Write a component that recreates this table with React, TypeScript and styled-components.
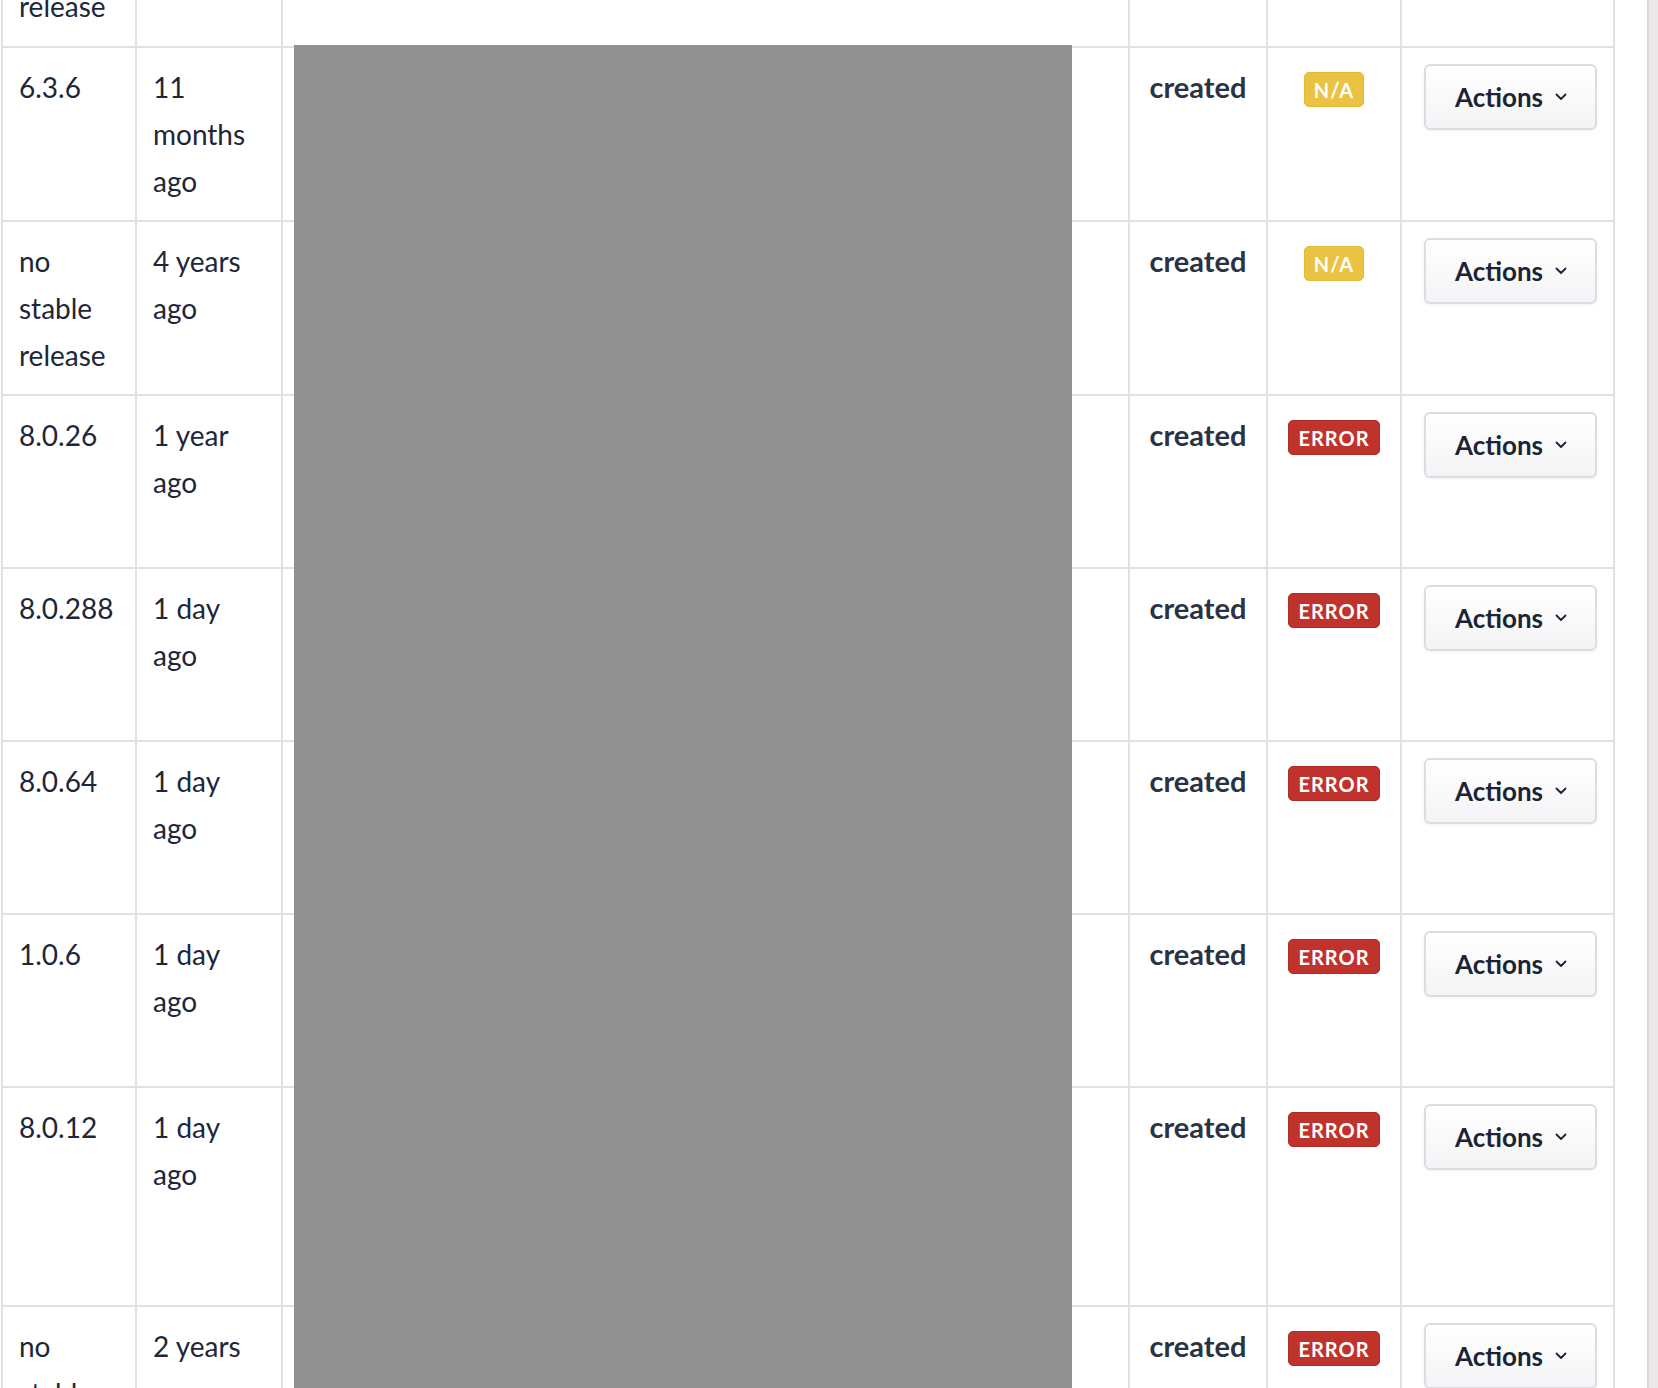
import React from 'react';
import styled, { createGlobalStyle } from 'styled-components';

const GlobalStyle = createGlobalStyle`
  html, body {
    margin: 0;
    padding: 0;
    background: #fff;
    overflow: hidden;
  }
  body {
    font-family: Lato, "Open Sans", sans-serif;
    color: #1d2739;
  }
`;

const Page = styled.div`
  display: flex;
  height: 100vh;
`;

const Viewport = styled.div`
  flex: 1;
  overflow: hidden;
`;

const ScrollTrack = styled.div`
  width: 9px;
  background: #ece7e8;
  border-left: 2px solid #dcd5d6;
`;

const TableWrap = styled.div`
  position: relative;
  width: 1613px;
  margin-left: 1px;
`;

const Table = styled.table`
  width: 100%;
  border-collapse: collapse;
  table-layout: fixed;
`;

const Row = styled.tr<{ $tall?: boolean }>`
  height: ${p => (p.$tall ? '219px' : '173px')};
`;

const Td = styled.td<{ $align?: 'left' | 'center' | 'right' }>`
  border: 2px solid #e1e0e5;
  padding: 16px;
  vertical-align: top;
  text-align: ${p => p.$align || 'left'};
  font-size: 28px;
  line-height: 46.7px;
`;

const Status = styled.span`
  font-size: 29px;
  font-weight: 700;
  color: #2a3344;
`;

const Badge = styled.span<{ $kind: 'na' | 'error' }>`
  display: inline-block;
  padding: 6px 9px 5px;
  border-radius: 5px;
  font-size: 20px;
  line-height: 22px;
  font-weight: 700;
  letter-spacing: 1px;
  color: #fff;
  background: ${p => (p.$kind === 'na' ? '#eac345' : '#c0332c')};
  border: 1px solid ${p => (p.$kind === 'na' ? '#e2b933' : '#ae2a24')};
`;

const ActionsButton = styled.button`
  display: inline-flex;
  align-items: center;
  gap: 12px;
  height: 66px;
  padding: 0 28px 0 29px;
  border: 2px solid #dcdce2;
  border-radius: 6px;
  background: linear-gradient(#ffffff, #f4f4f6);
  box-shadow: 0 1px 3px rgba(20, 20, 40, 0.06);
  font-family: Lato, "Open Sans", sans-serif;
  font-size: 26px;
  font-weight: 700;
  color: #1b2436;
  cursor: pointer;
`;

const Redaction = styled.div`
  position: absolute;
  top: 173px;
  bottom: 0;
  left: 293px;
  width: 778px;
  background: #919191;
`;

const Chevron = () => (
  <svg width="12" height="8" viewBox="0 0 12 8" fill="none">
    <path d="M1.5 1.5 L6 6 L10.5 1.5" stroke="#1b2436" strokeWidth="1.8" strokeLinecap="round" strokeLinejoin="round" />
  </svg>
);

type Release = { version: string; age: string; badge: 'na' | 'error'; tall?: boolean };

const releases: Release[] = [
  { version: 'no stable release', age: '3 years ago', badge: 'error' },
  { version: '6.3.6', age: '11 months ago', badge: 'na' },
  { version: 'no stable release', age: '4 years ago', badge: 'na' },
  { version: '8.0.26', age: '1 year ago', badge: 'error' },
  { version: '8.0.288', age: '1 day ago', badge: 'error' },
  { version: '8.0.64', age: '1 day ago', badge: 'error' },
  { version: '1.0.6', age: '1 day ago', badge: 'error' },
  { version: '8.0.12', age: '1 day ago', badge: 'error', tall: true },
  { version: 'no stable release', age: '2 years ago', badge: 'error' },
];

const App: React.FC = () => {
  const scrollTo = (el: HTMLDivElement | null) => {
    if (el) el.scrollTop = 128;
  };

  return (
    <>
      <GlobalStyle />
      <Page>
        <Viewport ref={scrollTo}>
          <TableWrap>
            <Table>
              <colgroup>
                <col style={{ width: 134 }} />
                <col style={{ width: 146 }} />
                <col style={{ width: 847 }} />
                <col style={{ width: 138 }} />
                <col style={{ width: 134 }} />
                <col style={{ width: 213 }} />
              </colgroup>
              <tbody>
                {releases.map((r, i) => (
                  <Row key={i} $tall={r.tall}>
                    <Td>{r.version}</Td>
                    <Td>{r.age}</Td>
                    <Td />
                    <Td $align="center">
                      <Status>created</Status>
                    </Td>
                    <Td $align="center">
                      <Badge $kind={r.badge}>{r.badge === 'na' ? 'N/A' : 'ERROR'}</Badge>
                    </Td>
                    <Td $align="right">
                      <ActionsButton>
                        Actions
                        <Chevron />
                      </ActionsButton>
                    </Td>
                  </Row>
                ))}
              </tbody>
            </Table>
            <Redaction />
          </TableWrap>
        </Viewport>
        <ScrollTrack />
      </Page>
    </>
  );
};

export default App;
